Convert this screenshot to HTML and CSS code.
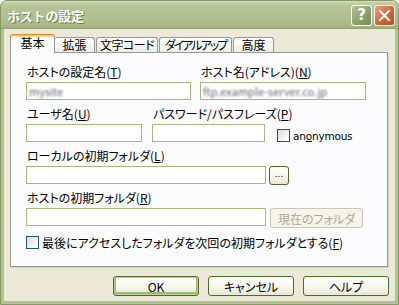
FILE: index.html
```html
<!DOCTYPE html>
<html lang="ja">
  <head>
    <meta charset="utf-8" />
    <link rel="stylesheet" href="styles.css">
  </head>
  <body>
    <div class="window">
      <div class="titlebar">
        <span class="title">ホストの設定</span>
        <div class="caption-buttons">
          <span class="cap cap-help">?</span>
          <span class="cap cap-close">
            <svg width="19" height="19" viewBox="0 0 19 19">
              <path d="M5 5 L14 14 M14 5 L5 14" stroke="#fff" stroke-width="2.2" stroke-linecap="square" />
            </svg>
          </span>
        </div>
      </div>

      <div class="client">
        <div class="tabs">
          <span class="tab active t-basic">基本</span>
          <span class="tab t-ext">拡張</span>
          <span class="tab t-code">文字コード</span>
          <span class="tab t-dial">ダイアルアップ</span>
          <span class="tab t-adv">高度</span>
        </div>

        <div class="panel">
          <div class="row">
            <div class="field w-name">
              <label>ホストの設定名(<u>T</u>)</label>
              <div class="edit"><span class="secret">mysite</span></div>
            </div>
            <div class="field w-host">
              <label>ホスト名(アドレス)(<u>N</u>)</label>
              <div class="edit"><span class="secret">ftp.example-server.co.jp</span></div>
            </div>
          </div>

          <div class="row">
            <div class="field w-user">
              <label>ユーザ名(<u>U</u>)</label>
              <div class="edit"></div>
            </div>
            <div class="field w-pass">
              <label>パスワード/パスフレーズ(<u>P</u>)</label>
              <div class="edit"></div>
            </div>
            <div class="check anon">
              <span class="box"></span>
              <span class="latin">an<u>o</u>nymous</span>
            </div>
          </div>

          <div class="row">
            <div class="field w-folder">
              <label>ローカルの初期フォルダ(<u>L</u>)</label>
              <div class="edit"></div>
            </div>
            <span class="btn btn-browse">...</span>
          </div>

          <div class="row">
            <div class="field w-folder">
              <label>ホストの初期フォルダ(<u>R</u>)</label>
              <div class="edit"></div>
            </div>
            <span class="btn btn-current disabled">現在のフォルダ</span>
          </div>

          <div class="check last-folder">
            <span class="box"></span>
            <span>最後にアクセスしたフォルダを次回の初期フォルダとする(<u>F</u>)</span>
          </div>
        </div>

        <div class="footer">
          <span class="btn default">OK</span>
          <span class="btn">キャンセル</span>
          <span class="btn">ヘルプ</span>
        </div>
      </div>
    </div>
  </body>
</html>
```

FILE: styles.css
```css
* {
  box-sizing: border-box;
}

body {
  margin: 0;
  background: #eeeee6;
  font-family: "Noto Sans CJK JP", sans-serif;
  font-size: 12px;
  font-feature-settings: "palt";
  color: #000;
}

u {
  text-underline-offset: 1px;
}

.window {
  width: 399px;
  height: 305px;
  display: flex;
  flex-direction: column;
  background: #b3c292;
  border: 1px solid #869867;
  border-radius: 7px 7px 0 0;
}

.titlebar {
  height: 28px;
  display: flex;
  align-items: center;
  justify-content: space-between;
  padding: 0 3px 0 6px;
  border-radius: 6px 6px 0 0;
  background: linear-gradient(
    #d8e0c2 0,
    #bfcca4 2px,
    #b4c395 7px,
    #afbf8f 18px,
    #a5b683 26px,
    #8d9f6b 28px
  );
}

.title {
  color: #fff;
  font-weight: bold;
  font-size: 13px;
  font-feature-settings: "palt" 0;
  letter-spacing: -0.2px;
  text-shadow: 1px 1px 0 #6f7f4f;
}

.caption-buttons {
  display: flex;
  gap: 2px;
}

.cap {
  width: 21px;
  height: 21px;
  border: 1px solid #fff;
  border-radius: 3px;
  display: flex;
  align-items: center;
  justify-content: center;
}

.cap-help {
  background: linear-gradient(135deg, #b0c194, #8aa06a 60%, #758c52);
  color: #fff;
  font-family: "DejaVu Sans", sans-serif;
  font-weight: bold;
  font-size: 15px;
}

.cap-close {
  background: linear-gradient(135deg, #f0a07c, #db5e34 55%, #c24a22);
}

.client {
  flex: 1;
  margin: 0 3px 3px;
  background: #ece9d8;
  display: flex;
  flex-direction: column;
}

/* tab strip */
.tabs {
  display: flex;
  align-items: flex-end;
  height: 18px;
  margin: 5px 0 0 6px;
  position: relative;
  z-index: 1;
}

.tab {
  height: 15px;
  line-height: 14px;
  margin-left: 1px;
  text-align: center;
  white-space: nowrap;
  overflow: hidden;
  border: 1px solid #919b9c;
  border-bottom: none;
  border-radius: 3px 3px 0 0;
  background: linear-gradient(#ffffff, #f7f7f3 50%, #ecebe4);
}

.tab.active {
  height: 19px;
  line-height: 16px;
  margin: 0 0 -1px 0;
  background: #fcfcfe;
  border-top: 1px solid #e68b2c;
  box-shadow: inset 0 1px 0 #ffc73c, inset 0 2px 0 #ffe1a0;
}

.tab.active + .tab {
  margin-left: 0;
  border-left: none;
}

.t-basic {
  width: 45px;
}

.t-ext {
  width: 40px;
}

.t-code {
  width: 62px;
  letter-spacing: -0.5px;
}

.t-dial {
  width: 73px;
  letter-spacing: -2px;
}

.t-adv {
  width: 41px;
}

.panel {
  height: 215px;
  margin: 0 7px 0 6px;
  padding: 12px 0 0 15px;
  border: 1px solid #919b9c;
  background: #fcfcfe;
  box-shadow: 1px 1px 0 #d6d3c2;
}

.row {
  display: flex;
  margin-bottom: 7px;
}

.field label {
  display: block;
  height: 14px;
  line-height: 14px;
  margin-bottom: 3px;
  padding-left: 1px;
  white-space: nowrap;
}

.edit {
  height: 18px;
  border: 1px solid #a4b97f;
  background: #fff;
  overflow: hidden;
}

.secret {
  display: block;
  padding-left: 2px;
  line-height: 16px;
  font-size: 11px;
  color: #666;
  filter: blur(1.1px);
  white-space: nowrap;
}

.w-name {
  width: 165px;
  margin-right: 9px;
}

.w-host {
  width: 166px;
}

.w-user {
  width: 116px;
  margin-right: 10px;
}

.w-pass {
  width: 113px;
}

.w-folder {
  width: 240px;
}

/* checkboxes */
.check {
  display: flex;
  align-items: center;
  gap: 3px;
  white-space: nowrap;
}

.box {
  width: 13px;
  height: 13px;
  border: 1px solid #1c5180;
  background: linear-gradient(135deg, #dcdbd2, #f4f4ef 60%, #fff);
}

.anon {
  align-self: flex-end;
  height: 13px;
  margin-left: 12px;
}

.latin {
  font-family: "DejaVu Sans", sans-serif;
  font-size: 10.5px;
  letter-spacing: -0.2px;
}

.last-folder {
  margin-top: 8px;
}

/* push buttons */
.btn {
  display: flex;
  align-items: center;
  justify-content: center;
  height: 20px;
  width: 86px;
  border: 1px solid #4a6d2c;
  border-radius: 3px;
  background: linear-gradient(#fffff9, #f7f6ec 60%, #e8e6d5);
  white-space: nowrap;
}

.btn.default {
  box-shadow: inset 0 0 0 1px #bcd19a, inset 0 -1px 0 2px #9cbb6a;
}

.btn-browse {
  width: 20px;
  height: 19px;
  margin: 0 0 -1px 3px;
  align-self: flex-end;
  font-family: "DejaVu Sans", sans-serif;
  font-size: 9px;
  line-height: 1;
  padding-bottom: 3px;
}

.btn-current {
  width: 93px;
  height: 20px;
  margin: 0 0 -2px 4px;
  align-self: flex-end;
}

.btn.disabled {
  color: #aca899;
  border-color: #c9c7ba;
  background: #f5f4ea;
}

.footer {
  display: flex;
  justify-content: flex-end;
  gap: 9px;
  padding: 9px 6px 0 0;
}
```
